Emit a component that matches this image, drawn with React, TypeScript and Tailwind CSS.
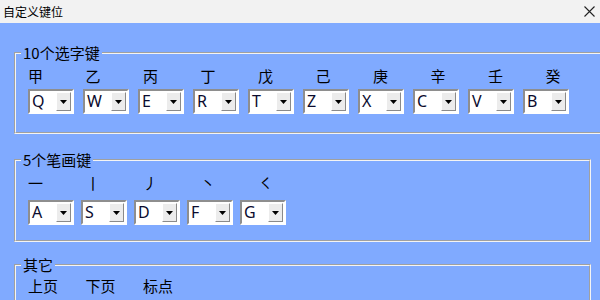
import React from 'react';

const cjk = "font-['Noto_Sans_CJK_SC',sans-serif]";

const stems = ['甲', '乙', '丙', '丁', '戊', '己', '庚', '辛', '壬', '癸'];
const stemKeys = ['Q', 'W', 'E', 'R', 'T', 'Z', 'X', 'C', 'V', 'B'];
const strokes = ['一', '丨', '丿', '丶', '㇛'];
const strokeKeys = ['A', 'S', 'D', 'F', 'G'];
const others = ['上页', '下页', '标点'];

function Combo({ value }: { value: string }) {
    return (
        <div className="flex h-[25px] w-[46px] shrink-0 border-2 border-t-[#8e8e8e] border-l-[#8e8e8e] border-r-white border-b-white bg-white p-[1px]">
            <span className="flex-1 pl-[1px] font-['Noto_Sans',sans-serif] text-[16px] leading-[19px] text-[#0b0b2e]">
                {value}
            </span>
            <span className="flex w-[15px] items-center justify-center border border-t-white border-l-white border-r-[#8a8a8a] border-b-[#8a8a8a] bg-[#ececec]">
                <svg width="7" height="4" viewBox="0 0 7 4">
                    <path d="M0 0h7L3.5 4z" fill="#000" />
                </svg>
            </span>
        </div>
    );
}

function Group({ title, children }: { title: string; children: React.ReactNode }) {
    return (
        <fieldset className="ml-[14px] mr-[9px] border-2 border-[#f4f4f4] [border-style:groove]! pl-[5px]">
            <legend className={`px-[2px] text-[15px] leading-[20px] text-black ${cjk}`}>{title}</legend>
            {children}
        </fieldset>
    );
}

function Labels({ items, tight }: { items: string[]; tight?: boolean }) {
    return (
        <div className={`ml-[7px] flex text-[15px] text-black ${tight ? 'leading-[16px]' : 'leading-[20px]'} ${cjk}`}>
            {items.map((t, i) => (
                <span key={i} className="w-[57.5px] shrink-0">
                    <span className="inline-block min-w-[15px] text-center">{t}</span>
                </span>
            ))}
        </div>
    );
}

export default function App() {
    return (
        <div className="h-[300px] w-[600px] overflow-hidden bg-[#80aaff]">
            {/* title bar */}
            <div className="flex h-[23px] items-center justify-between bg-[#f2f2f2] pl-[3px] pr-[5px]">
                <span className={`text-[12px] leading-none text-black ${cjk}`}>自定义键位</span>
                <svg width="11" height="11" viewBox="0 0 11 11" className="mb-[1px]">
                    <path d="M0.5 0.5l10 10M10.5 0.5l-10 10" stroke="#222" strokeWidth="1.1" />
                </svg>
            </div>

            <div className="flex flex-col pt-[20px]">
                <Group title="10个选字键">
                    <div className="pt-[3px]">
                        <Labels items={stems} />
                    </div>
                    <div className="ml-[7px] mt-[3px] mb-[18px] flex gap-[9px]">
                        {stemKeys.map((k) => (
                            <Combo key={k} value={k} />
                        ))}
                    </div>
                </Group>

                <div className="mt-[16px]">
                    <Group title="5个笔画键">
                        <div className="pt-[3px]">
                            <Labels items={strokes} />
                        </div>
                        <div className="ml-[7px] mt-[7px] mb-[15px] flex gap-[7px]">
                            {strokeKeys.map((k) => (
                                <Combo key={k} value={k} />
                            ))}
                        </div>
                    </Group>
                </div>

                <div className="mt-[13px]">
                    <Group title="其它">
                        <div className="pt-[3px] pb-[30px]">
                            <Labels items={others} tight />
                        </div>
                    </Group>
                </div>
            </div>
        </div>
    );
}
